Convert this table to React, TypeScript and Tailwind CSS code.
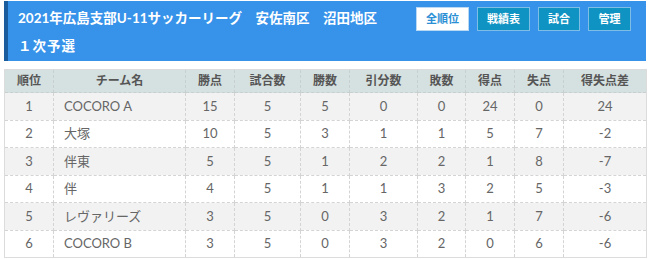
const cols = [49, 132, 49, 66, 49, 68, 48, 49, 49, 83];
const heads = ["順位", "チーム名", "勝点", "試合数", "勝数", "引分数", "敗数", "得点", "失点", "得失点差"];

const rows: (string | number)[][] = [
  [1, "COCORO A", 15, 5, 5, 0, 0, 24, 0, 24],
  [2, "大塚", 10, 5, 3, 1, 1, 5, 7, -2],
  [3, "伴東", 5, 5, 1, 2, 2, 1, 8, -7],
  [4, "伴", 4, 5, 1, 1, 3, 2, 5, -3],
  [5, "レヴァリーズ", 3, 5, 0, 3, 2, 1, 7, -6],
  [6, "COCORO B", 3, 5, 0, 3, 2, 0, 6, -6],
];

const font = { fontFamily: 'Lato, "Noto Sans CJK JP", sans-serif' };

export default function App() {
  return (
    <div className="w-[650px] h-[259px] bg-white px-[4px] pt-[1px] overflow-hidden" style={font}>
      {/* Header */}
      <div className="h-[60px] bg-[#3792ea] border-l-[4px] border-[#1b5d9c] flex justify-between">
        <div className="pl-[10px] pt-[3px] text-white font-bold text-[13.5px] leading-[28px]">
          <div>2021年広島支部U-11サッカーリーグ　安佐南区　沼田地区</div>
          <div className="tracking-[1px]">１次予選</div>
        </div>
        <div className="flex gap-[8px] pt-[6px] pr-[15px] text-[11px] font-bold">
          <button className="h-[24px] w-[53px] bg-white text-[#2a8fd4] border border-[#b9d8f3]">全順位</button>
          <button className="h-[24px] w-[53px] bg-[#0f93c2] text-white border border-[#7dbde6]">戦績表</button>
          <button className="h-[24px] w-[42px] bg-[#0f93c2] text-white border border-[#7dbde6]">試合</button>
          <button className="h-[24px] w-[43px] bg-[#0f93c2] text-white border border-[#7dbde6]">管理</button>
        </div>
      </div>

      {/* Standings table */}
      <table className="mt-[8px] w-[642px] table-fixed border-collapse border border-[#dcdcdc]">
        <colgroup>
          {cols.map((w, i) => (
            <col key={i} style={{ width: w }} />
          ))}
        </colgroup>
        <thead>
          <tr className="h-[23px] bg-[#d5e0e0]">
            {heads.map((h) => (
              <th key={h} className="font-bold text-[12px] text-[#555] text-center border border-dashed border-[#c8cfcf]">
                {h}
              </th>
            ))}
          </tr>
        </thead>
        <tbody>
          {rows.map((r, ri) => (
            <tr key={ri} className={`h-[27.5px] ${ri % 2 === 0 ? "bg-[#f2f2f2]" : "bg-white"}`}>
              {r.map((c, ci) => (
                <td
                  key={ci}
                  className={`text-[13px] text-[#666] border border-dashed border-[#d4d4d4] ${
                    ci === 1 ? "text-left pl-[10px]" : "text-center"
                  }`}
                >
                  {c}
                </td>
              ))}
            </tr>
          ))}
        </tbody>
      </table>
    </div>
  );
}
